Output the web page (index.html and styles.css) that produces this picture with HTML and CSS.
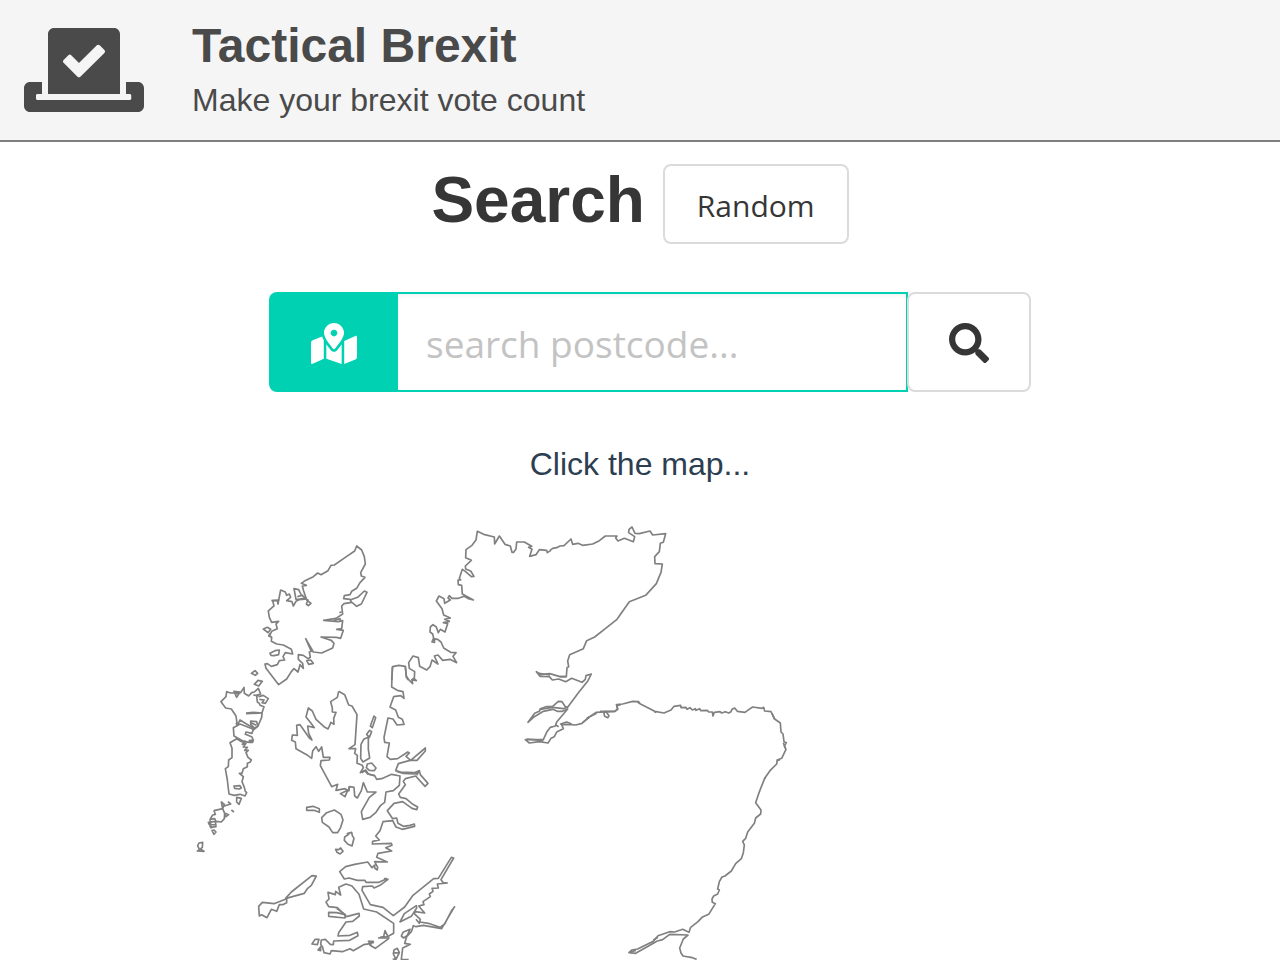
FILE: index.html
```html
<!DOCTYPE html>
<html lang="en">
<head>
<meta charset="utf-8">
<meta name="viewport" content="width=device-width, initial-scale=1">
<title>Tactical Brexit</title>
<link rel="stylesheet" href="styles.css">
</head>
<body>
<header class="header">
  <svg class="logo" viewBox="0 0 640 448" aria-hidden="true"><path d="M608 288h-64v64h20c4 0 8 3 8 8v16c0 5-4 8-8 8H72c-4 0-8-3-8-8v-16c0-5 4-8 8-8H96v-64H32c-17.700 0-32 14.300-32 32v96c0 17.700 14.300 32 32 32h576c17.700 0 32-14.300 32-32v-96c0-17.700-14.300-32-32-32zm-96 64V32.300c0-17.800-14.300-32.300-31.900-32.300H160.200C142.400 0 128 14.400 128 32.300V352h384zM211.200 170l25.500-25.300c4.200-4.200 11-4.200 15.200.1l41.300 41.600 95.200-94.400c4.200-4.200 11-4.200 15.200.1l25.300 25.500c4.200 4.200 4.200 11-.1 15.200L300.500 260c-4.200 4.200-11 4.200-15.200-.1l-74.100-74.700c-4.300-4.200-4.200-11 0-15.200z"/></svg>
  <div>
    <h1 class="title">Tactical Brexit</h1>
    <p class="subtitle">Make your brexit vote count</p>
  </div>
</header>
<main class="main">
  <div class="heading">
    <h2 class="heading-text">Search</h2>
    <button class="button" type="button">Random</button>
  </div>
  <form class="search">
    <label class="search-label" for="postcode" aria-label="Postcode">
      <svg class="map-icon" viewBox="0 0 576 512" aria-hidden="true"><path d="M288 0c-69.600 0-126 56.400-126 126 0 56.300 82.400 158.800 113.900 196 6.400 7.500 17.800 7.500 24.200 0C331.700 284.800 414 182.300 414 126 414 56.400 357.600 0 288 0zm0 168c-23.200 0-42-18.800-42-42s18.800-42 42-42 42 18.800 42 42-18.800 42-42 42zM20.100 216A32 32 0 0 0 0 245.700v250.300c0 11.300 11.400 19.100 21.900 14.900L160 448V214.900c-8.800-16-16.100-31.500-21.300-46.400L20.100 216zM288 359.700c-14.100 0-27.400-6.200-36.500-17-19.700-23.200-40.600-49.600-59.500-76.700v182l192 64V266c-18.900 27.100-39.800 53.500-59.500 76.700-9.100 10.800-22.400 17-36.500 17zm266.100-198.500L416 224v288l139.900-56a32 32 0 0 0 20.100-29.700V176c0-11.300-11.400-19.100-21.900-14.800z"/></svg>
    </label>
    <input class="search-input" id="postcode" type="text" placeholder="search postcode...">
    <button class="search-button" type="submit" aria-label="Search">
      <svg class="search-icon" viewBox="0 0 512 512" aria-hidden="true"><path d="M505 442.700L405.300 343c-4.500-4.500-10.600-7-17-7H372c27.600-35.300 44-79.700 44-128C416 93.100 322.900 0 208 0S0 93.100 0 208s93.100 208 208 208c48.300 0 92.700-16.400 128-44v16.300c0 6.400 2.500 12.500 7 17l99.700 99.700c9.400 9.400 24.600 9.400 33.900 0l28.300-28.300c9.400-9.400 9.400-24.600.1-34zM208 336c-70.700 0-128-57.200-128-128 0-70.700 57.200-128 128-128 70.700 0 128 57.200 128 128 0 70.700-57.200 128-128 128z"/></svg>
    </button>
  </form>
  <p class="hint">Click the map...</p>
  <svg class="map" viewBox="0 510 1280 450" role="img" aria-label="Map of Scotland">
    <!-- Lewis and Harris -->
    <g transform="translate(190 530) scale(.33333)">
      <path d="M500 48L494 63 466 82 433 105 423 106 414 122 393 134 383 129 370 140 345 152 334 160 349 166 337 168 341 183 350 210 363 220 355 227 349 222 354 210 340 205 330 208 318 214 310 228 306 215 290 212 302 202 298 192 290 196 286 186 272 180 268 200 264 222 262 212 248 212 252 228 235 243 238 262 245 277 266 274 258 282 262 296 245 304 238 318 245 322 244 334 260 342 280 345 304 358 308 372 286 368 279 380 284 390 268 392 262 404 244 409 232 401 225 402 228 415 266 464 290 447 304 425 312 416 324 426 330 404 340 415 338 400 325 388 325 374 340 376 354 386 361 382 358 366 364 364 347 326 370 366 395 369 428 354 432 340 424 331 393 321 440 322 452 325 460 301 440 298 455 296 458 272 444 275 401 271 438 265 458 252 455 228 462 221 485 217 480 208 461 206 463 197 480 194 485 184 500 175 510 158 525 142 514 138 512 128 526 102 523 80 515 60Z"/>
      <path d="M312 176L326 179 334 195 349 206 338 208 318 208ZM322 200L340 195M480 210L503 202 523 183 531 187 514 222 500 229 486 217M220 297L232 292 242 298 234 308ZM240 310L236 318 244 320M240 370L255 362 268 360 266 374 252 377 243 376ZM184 430L195 422 203 430 196 436ZM193 463L204 451 217 454 206 468ZM350 392L362 390 370 400 356 403ZM455 245L448 248M430 272L450 266 452 273M244 212L268 210"/>
    </g>
    <!-- The Uists, Barra, Skye and the Small Isles -->
    <g transform="translate(190 680) scale(.33333)">
      <path d="M93 65L108 50 110 35 122 39 152 38 162 22 163 40 176 48 185 38 193 36 205 25 212 42 200 46 202 66 208 70 210 76 222 80 216 98 215 112 204 138 190 150 188 143 150 120 142 136 138 108 124 87 107 84Z"/>
      <path d="M132 34L150 36 140 52ZM136 40L146 42M206 50L220 46 235 56 226 70 216 68 222 60 208 58M190 45L208 48M168 99L190 97 216 99 168 101M182 123L200 125 203 138 194 145 182 133ZM184 128L198 136M142 136L138 128M130 143L150 132 175 142 190 148 186 160 168 156 166 163 185 170 190 180 178 187 160 184 132 168ZM176 182L190 180 188 187 176 187"/>
      <path d="M120 188L140 176 155 185 165 183 157 193 168 190 160 201 172 202 164 211 175 211 168 218 174 232 184 240 180 247 172 250 172 260 160 266 156 280 148 280 160 290 156 305 163 322 166 334 170 338 165 348 150 343 133 346 117 342 112 300 106 266 115 260 116 240 126 233 126 205Z"/>
      <path d="M132 318L150 317 154 324 148 327 134 325ZM140 352L154 355 147 373 140 366ZM94 366L103 373 98 386ZM103 378L122 372 114 365M124 390L132 396M106 400L116 404 108 410 104 402M72 392L98 386 104 400 103 416 94 426 78 424 74 416 60 418 68 405 76 403ZM55 427L76 424 78 440 62 442ZM60 420L64 446M56 433L80 435M66 452L72 450 78 456 72 463ZM28 508L23 497 27 489 38 487 37 502 30 508ZM22 513L32 508 42 514Z"/>
      <path d="M350 382L369 379 388 386 388 397 372 391 350 391ZM395 413L410 398 433 390 453 403 459 420 452 442 443 458 428 458 417 441 397 427ZM472 461L485 457 487 467 492 475 486 498 473 492 463 481 464 471 476 463ZM437 508L446 509 452 504 459 514 450 522 441 517Z"/>
    </g>
    <g transform="translate(280 680) scale(.33333)">
      <path d="M176 34L194 44 206 75 216 78 231 104 225 194 207 206 227 206 224 220 232 226 231 250 247 256 250 263 241 278 257 270 265 282 283 287"/>
      <path d="M176 34L172 52 152 65 157 84 157 96 168 97 161 115 162 133 153 127 144 147 132 140 108 118 97 93 85 84 78 111 92 128 103 143 83 138 86 160 96 180 88 174 60 134 50 136 52 166 37 165 35 181 46 186 48 206 80 224 95 235 98 213 108 200 116 214 125 201 130 232 150 232 148 240 123 242 121 257 155 320 173 313 168 331 195 326 206 332 208 319"/>
      <path d="M282 108L287 113 277 143 271 138ZM269 151L275 155 268 172 260 163ZM251 178L265 172 265 208 269 234 249 246 242 235 243 193ZM262 252L275 249 288 264 283 272 268 271 259 263ZM181 341L203 331 195 350Z"/>
    </g>
    <!-- North-west mainland, from the Kyle up to Cape Wrath and along the north coast -->
    <g transform="translate(370 520) scale(.33333)">
      <path d="M65 480L68 440 86 436 106 439 109 472 115 480M125 480L133 474 134 455 118 445 116 428 129 408 145 413 149 439 170 450 180 440 186 420 204 432 193 408 204 405 218 421 240 418 260 428 249 409 258 398 242 397 221 384 213 366 203 358 190 356 186 366 194 367 188 342 180 336 181 321 189 314 199 321 205 338 211 328 225 336 233 311 220 308 238 304 224 298 241 294 221 285 216 266 199 243 207 228 222 236 224 250 241 240 234 234 238 227 246 235 265 235 283 229 293 235 310 240 277 222 275 196 265 194 264 180 272 180 268 175 277 148 286 154 304 170 312 169 302 153 287 147 286 138 304 121 287 113 288 89 306 76 318 60 322 34 341 43 373 51 374 72 388 48 405 73 421 78 426 97 431 97 438 87 440 66 463 66 485 79 476 82 486 88 479 109 498 104 508 89 530 91 532 98 543 91M187 358L196 362M284 230L304 238"/>
    </g>
    <g transform="translate(560 520) scale(.33333)">
      <path d="M-30 91L-22 85-10 83 0 78 12 77 33 57 38 73 54 70 68 76 98 72 118 62 136 48 171 48 167 54 174 63 193 55 220 65 224 50 206 38 207 28 216 21 225 40 238 41 270 33 278 45 317 41 310 67 301 70 298 95 284 110 285 131 307 132 303 157 289 191 257 226 208 245 171 298 133 328 104 351 80 362 70 386 29 404 23 423 26 440 21 443 19 470 0 470"/>
    </g>
    <!-- Dornoch, Cromarty and Moray firths -->
    <g transform="translate(510 650) scale(.33333)">
      <path d="M169 80L150 80 119 71 92 74 79 65 90 79 118 80 127 90 146 87 167 95 185 85 216 97 226 88 228 77 244 72 234 92 204 130 173 172 166 170 156 155 145 154 128 169 108 170 91 176 88 184 74 190 54 217 73 200 100 184 128 178 142 184 157 184 173 177 140 216 136 228 121 232 111 245 100 269 46 269 58 279 88 275 114 279 123 265 133 260 140 246 160 236 155 224 168 223 197 225 216 220 236 202 258 187 315 184 323 178 319 163"/>
      <path d="M82 69L120 75M90 178L128 172 160 176 172 172M50 267L100 272M136 224L146 230M150 223L170 216 185 222M218 217L238 202M230 205L260 190M282 190L287 184 297 197 293 203 284 199Z"/>
    </g>
    <!-- North-east coast down to the Firth of Tay -->
    <g transform="translate(600 700) scale(.33333)">
      <path d="M0 34L44 34 53 27 50 14 68 12 98 4 116 5 120 11 164 34 192 39 213 30 222 19 242 16 243 23 258 22 261 28 270 23 277 30 286 26 288 31 299 26 302 32 322 31 326 36 337 36 339 48 343 37 360 35 365 39 376 35 386 39 393 35 396 28 404 24 412 34 435 37 446 29 458 21 486 25 491 22 494 33 513 35 524 57 541 69 543 96 549 102 552 125 559 128 553 138 558 148 545 175 532 180 530 192 510 212 494 235 476 281 467 308 483 330 482 342 467 354 463 370 443 396 437 415 428 424 433 435 430 458 424 476 407 491 394 513 375 528 366 531 358 545 353 567 358 570 353 582 341 588 336 597 337 607 346 611 326 643 306 652 294 665 272 682 267 697 248 688 224 696 209 695 174 707 160 724 113 747 95 750 87 758 107 760 172 723 188 719 209 703 264 705 250 717 239 744 243 759 249 768 277 773 290 778"/>
      <path d="M50 17L62 14M112 4L118 10M163 34L168 38M516 40L524 58M550 128L556 145M530 182L540 179M492 234L498 234M160 720L174 712M90 756L108 751"/>
    </g>
    <!-- Wester Ross -->
    <g transform="translate(350 650) scale(.33333)">
      <path d="M127 50L125 111 142 121 159 125 162 145 152 137 131 140 120 171 137 180 145 202 157 208 162 223 141 225 129 207 114 204 102 262 104 277 118 279 111 320 121 328 143 326 173 306 178 309 168 319 182 331 226 294 226 303 201 331 180 331 145 341 137 362 152 366 192 368 208 362 200 376M166 50L169 78 176 89 188 101 186 89 199 92 191 84"/>
    </g>
    <!-- Lochaber, Mull, Coll and Tiree, Argyll -->
    <g transform="translate(250 770) scale(.33333)">
      <path d="M335 8L345 2 353 12 374 17 380 28 395 26 425 13 450 18 448 46 430 62 408 66 404 97 392 106 378 127 360 142 338 148 334 125 358 82 378 66 352 66 340 38 334 62 322 84 314 78 312 52 298 50 296 64"/>
      <path d="M440 4L460 10 495 12 508 2 511 14 534 40 525 49 497 18 466 26 460 34 466 44 446 72 451 82 468 86 486 101 503 111 500 119 486 115 458 95 432 100 412 122 428 146 440 144 444 160 460 169 480 166 493 162 494 169 457 178 438 171 428 152 399 155 390 182 377 198 388 210 368 214 367 222 424 220 426 226 407 233 425 243 384 250 380 262 412 276 374 275 383 292 382 300 374 294 374 285 366 293 353 276 314 283 287 290 269 305 283 327 297 324 322 331 345 331 348 337 387 337 410 326 404 326 414 328 390 346 372 354 367 348 338 350 336 361 361 404 399 412 430 437 464 411 489 376 551 326 565 325 604 262 611 264 573 329 580 338 592 339 562 342 565 354 546 355 549 364 538 372 541 380 519 395 522 404 506 408 524 429 496 425 492 430 511 448 508 460 498 448"/>
      <path d="M615 409L606 420 584 462 570 472 535 460 510 456M612 413L575 476 520 466 498 470 490 467 484 485 470 500 464 520 481 523 458 534 454 568 476 569M480 478L459 487 454 498 461 504 472 496ZM450 456L463 431 499 407 500 414 484 439ZM432 540L442 535 448 548 438 568 430 552ZM433 548L446 549M428 567L440 568"/>
      <path d="M266 352L288 342 306 348 327 373 341 417 380 426 431 460 431 490 416 498 416 506 376 535 360 526 370 514 355 514 361 521 341 524 310 542 300 536 277 545 244 542 240 552 222 548 218 532 212 523 214 510 226 508 241 523 250 524 251 513 299 511 324 497 322 487 300 496 264 498 266 488 288 456 308 454 328 438 327 430 289 440 262 413 236 410 228 396 237 387 234 367 256 374 257 364 272 375Z"/>
      <path d="M236 427L260 428 286 434 285 444 236 439ZM260 415L286 434M186 522L195 508 207 508 202 524ZM204 540L212 530 212 542ZM386 504L401 500 405 482 414 500ZM390 503L414 504M356 514L372 518M26 409L37 397 72 401 110 386 110 398 98 404 88 404 80 424 64 418 51 443 35 434 28 438ZM106 386L124 366 186 317 199 318 184 346 173 355 163 370 130 379 106 386"/>
    </g>
  </svg>
</main>
</body>
</html>
```
FILE: styles.css
```css
* { box-sizing: border-box; }

body {
  margin: 0;
  background: #fff;
  color: #4a4a4a;
  font-family: "Liberation Sans", Arial, sans-serif;
}

h1, h2, p { margin: 0; }

.header {
  display: flex;
  align-items: center;
  gap: 48px;
  padding: 16px 24px;
  background: #f5f5f5;
  border-bottom: 2px solid #808080;
}

.logo {
  width: 120px;
  height: 84px;
  fill: #4a4a4a;
}

.title {
  font-size: 48px;
  line-height: 60px;
}

.subtitle {
  font-size: 32px;
  line-height: 48px;
}

.main { text-align: center; }

.heading {
  display: flex;
  justify-content: center;
  gap: 18px;
  padding-top: 22px;
}

.heading-text {
  color: #363636;
  font-size: 64px;
  line-height: 72px;
}

.button, .search-button {
  background: #fff;
  border: 2px solid #dbdbdb;
  border-radius: 8px;
  color: #363636;
}

.button {
  height: 80px;
  padding: 4px 32px 0;
  font: 30px/48px "Open Sans", "Noto Sans", sans-serif;
}

.search {
  display: flex;
  width: 762px;
  max-width: 100%;
  margin: 48px auto 0;
  transform: translateX(10px);
}

.search-label {
  display: flex;
  flex: 0 0 129px;
  align-items: center;
  justify-content: center;
  padding-top: 2px;
  background: #00d1b2;
  border-radius: 8px 0 0 8px;
}

.map-icon {
  width: 46px;
  height: 41px;
  fill: #fff;
}

.search-input {
  flex: 1;
  min-width: 0;
  height: 100px;
  padding: 2px 28px 0;
  border: 2px solid #00d1b2;
  border-left: 0;
  border-radius: 0;
  background: #fff;
  box-shadow: inset 0 2px 4px rgba(10, 10, 10, .05);
  color: #363636;
  font: 37px/60px "Open Sans", "Noto Sans", sans-serif;
}

.search-input::placeholder {
  color: #c3c3c3;
  opacity: 1;
}

.search-button {
  flex: 0 0 124px;
  margin-left: -1px;
  padding: 2px 0 0;
}

.search-icon {
  display: block;
  width: 40px;
  height: 40px;
  margin: 0 auto;
  fill: #363636;
}

.hint {
  margin-top: 48px;
  color: #2c3e50;
  font-size: 32px;
  line-height: 48px;
}

.map {
  display: block;
  width: 100%;
  margin-top: 22px;
}

.map path {
  fill: none;
  stroke: #808080;
  stroke-width: 5;
  stroke-linejoin: round;
}
```
